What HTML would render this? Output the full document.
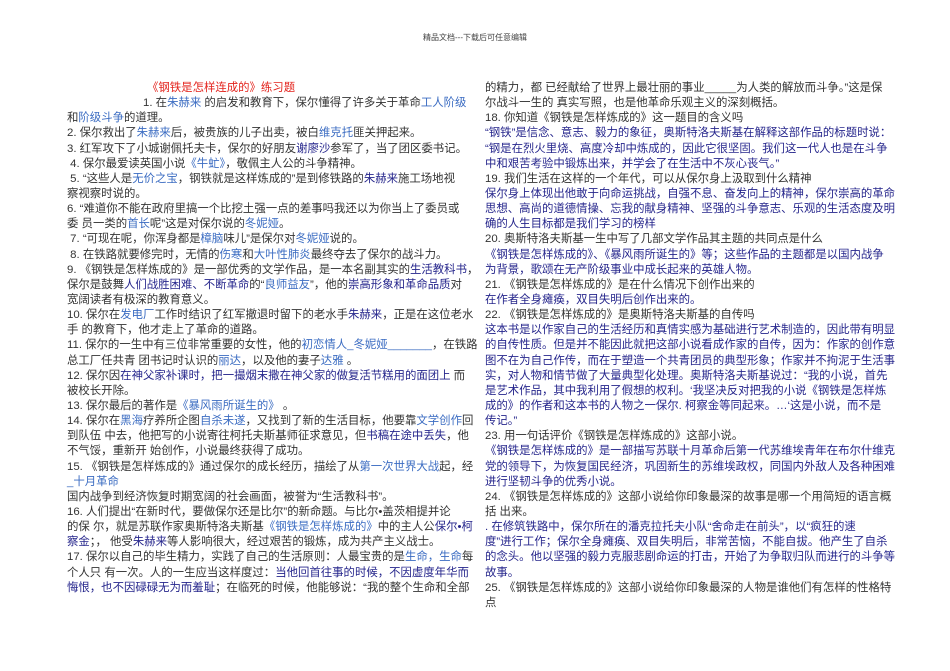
<!DOCTYPE html>
<html><head><meta charset="utf-8">
<style>
html,body{margin:0;padding:0;background:#fff;}
body{width:950px;height:671px;position:relative;overflow:hidden;font-family:"Liberation Sans","Noto Sans CJK SC",sans-serif;color:#333;}
.hdr{position:absolute;top:32px;left:0;width:950px;text-align:center;font-size:8px;color:#444;}
.col{position:absolute;top:81px;font-size:11.4px;line-height:15.15px;white-space:nowrap;}
.l{height:15.15px;}
.r{color:#e3231c;}
.b{color:#3b6cc2;}
.d{color:#26268c;}
</style></head><body>
<div class="hdr">精品文档---下载后可任意编辑</div>
<div class="col" style="left:67px;">
<div class="l" style="padding-left:80px"><span class="r">《钢铁是怎样连成的》练习题</span></div>
<div class="l" style="padding-left:76px">1. 在<span class="b">朱赫来</span> 的启发和教育下，保尔懂得了许多关于革命<span class="b">工人阶级</span></div>
<div class="l">和<span class="b">阶级斗争</span>的道理。</div>
<div class="l">2. 保尔救出了<span class="b">朱赫来</span>后，被贵族的儿子出卖，被白<span class="b">维克托</span>匪关押起来。</div>
<div class="l">3. 红军攻下了小城谢佩托夫卡，保尔的好朋友<span class="d">谢廖沙</span>参军了，当了团区委书记。</div>
<div class="l">&nbsp;4. 保尔最爱读英国小说<span class="b">《牛虻》</span>，敬佩主人公的斗争精神。</div>
<div class="l">&nbsp;5. “这些人是<span class="b">无价之宝</span>，钢铁就是这样炼成的”是到修铁路的<span class="d">朱赫来</span>施工场地视</div>
<div class="l">察视察时说的。</div>
<div class="l">6. “难道你不能在政府里搞一个比挖土强一点的差事吗我还以为你当上了委员或</div>
<div class="l">委 员一类的<span class="b">首长</span>呢”这是对保尔说的<span class="b">冬妮娅</span>。</div>
<div class="l">&nbsp;7. “可现在呢，你浑身都是<span class="b">樟脑</span>味儿”是保尔对<span class="b">冬妮娅</span>说的。</div>
<div class="l">&nbsp;8. 在铁路就要修完时，无情的<span class="b">伤寒</span>和<span class="b">大叶性肺炎</span>最终夺去了保尔的战斗力。</div>
<div class="l">9. 《钢铁是怎样炼成的》是一部优秀的文学作品，是一本名副其实的<span class="d">生活教科书</span>，</div>
<div class="l">保尔是鼓舞<span class="d">人们战胜困难、不断革命</span>的“<span class="b">良师益友</span>”，他的<span class="d">崇高形象和革命品质</span>对</div>
<div class="l">宽阔读者有极深的教育意义。</div>
<div class="l">10. 保尔在<span class="b">发电厂</span>工作时结识了红军撤退时留下的老水手<span class="d">朱赫来</span>，正是在这位老水</div>
<div class="l">手 的教育下，他才走上了革命的道路。</div>
<div class="l">11. 保尔的一生中有三位非常重要的女性，他的<span class="b">初恋情人_冬妮娅_______</span>，在铁路</div>
<div class="l">总工厂任共青 团书记时认识的<span class="b">丽达</span>，以及他的妻子<span class="b">达雅</span> 。</div>
<div class="l">12. 保尔因<span class="d">在神父家补课时，把一撮烟末撒在神父家的做复活节糕用的面团上</span> 而</div>
<div class="l">被校长开除。</div>
<div class="l">13. 保尔最后的著作是<span class="b">《暴风雨所诞生的》</span> 。</div>
<div class="l">14. 保尔在<span class="b">黑海</span>疗养所企图<span class="b">自杀未遂</span>，又找到了新的生活目标，他要靠<span class="b">文学创作</span>回</div>
<div class="l">到队伍 中去，他把写的小说寄往柯托夫斯基师征求意见，但<span class="d">书稿在途中丢失</span>，他</div>
<div class="l">不气馁，重新开 始创作，小说最终获得了成功。</div>
<div class="l">15. 《钢铁是怎样炼成的》通过保尔的成长经历，描绘了从<span class="b">第一次世界大战</span>起，经</div>
<div class="l"><span class="b">_十月革命</span></div>
<div class="l">国内战争到经济恢复时期宽阔的社会画面，被誉为“生活教科书”。</div>
<div class="l">16. 人们提出“在新时代，要做保尔还是比尔”的新命题。与比尔•盖茨相提并论</div>
<div class="l">的保 尔，就是苏联作家奥斯特洛夫斯基<span class="b">《钢铁是怎样炼成的》</span>中的主人公<span class="d">保尔•柯</span></div>
<div class="l"><span class="d">察金</span>；， 他受<span class="d">朱赫来</span>等人影响很大，经过艰苦的锻炼，成为共产主义战士。</div>
<div class="l">17. 保尔以自己的毕生精力，实践了自己的生活原则：人最宝贵的是<span class="b">生命，生命</span>每</div>
<div class="l">个人只 有一次。人的一生应当这样度过：<span class="d">当他回首往事的时候，不因虚度年华而</span></div>
<div class="l"><span class="d">悔恨，也不因碌碌无为而羞耻</span>；在临死的时候，他能够说：“我的整个生命和全部</div>
</div>
<div class="col" style="left:485px;">
<div class="l">的精力，都 已经献给了世界上最壮丽的事业_____为人类的解放而斗争。”这是保</div>
<div class="l">尔战斗一生的 真实写照，也是他革命乐观主义的深刻概括。</div>
<div class="l">18. 你知道《钢铁是怎样炼成的》这一题目的含义吗</div>
<div class="l d">“钢铁”是信念、意志、毅力的象征，奥斯特洛夫斯基在解释这部作品的标题时说：</div>
<div class="l d">“钢是在烈火里烧、高度冷却中炼成的，因此它很坚固。我们这一代人也是在斗争</div>
<div class="l d">中和艰苦考验中锻炼出来，并学会了在生活中不灰心丧气。”</div>
<div class="l">19. 我们生活在这样的一个年代，可以从保尔身上汲取到什么精神</div>
<div class="l d">保尔身上体现出他敢于向命运挑战，自强不息、奋发向上的精神，保尔崇高的革命</div>
<div class="l d">思想、高尚的道德情操、忘我的献身精神、坚强的斗争意志、乐观的生活态度及明</div>
<div class="l d">确的人生目标都是我们学习的榜样</div>
<div class="l">20. 奥斯特洛夫斯基一生中写了几部文学作品其主题的共同点是什么</div>
<div class="l d">《钢铁是怎样炼成的》、《暴风雨所诞生的》等；这些作品的主题都是以国内战争</div>
<div class="l d">为背景，歌颂在无产阶级事业中成长起来的英雄人物。</div>
<div class="l">21. 《钢铁是怎样炼成的》是在什么情况下创作出来的</div>
<div class="l d">在作者全身瘫痪，双目失明后创作出来的。</div>
<div class="l">22. 《钢铁是怎样炼成的》是奥斯特洛夫斯基的自传吗</div>
<div class="l d">这本书是以作家自己的生活经历和真情实感为基础进行艺术制造的，因此带有明显</div>
<div class="l d">的自传性质。但是并不能因此就把这部小说看成作家的自传，因为：作家的创作意</div>
<div class="l d">图不在为自己作传，而在于塑造一个共青团员的典型形象；作家并不拘泥于生活事</div>
<div class="l d">实，对人物和情节做了大量典型化处理。奥斯特洛夫斯基说过：“我的小说，首先</div>
<div class="l d">是艺术作品，其中我利用了假想的权利。‘我坚决反对把我的小说《钢铁是怎样炼</div>
<div class="l d">成的》的作者和这本书的人物之一保尔. 柯察金等同起来。…‘这是小说，而不是</div>
<div class="l d">传记。”</div>
<div class="l">23. 用一句话评价《钢铁是怎样炼成的》这部小说。</div>
<div class="l d">《钢铁是怎样炼成的》是一部描写苏联十月革命后第一代苏维埃青年在布尔什维克</div>
<div class="l d">党的领导下，为恢复国民经济，巩固新生的苏维埃政权，同国内外敌人及各种困难</div>
<div class="l d">进行坚韧斗争的优秀小说。</div>
<div class="l">24. 《钢铁是怎样炼成的》这部小说给你印象最深的故事是哪一个用简短的语言概</div>
<div class="l">括 出来。</div>
<div class="l d">. 在修筑铁路中，保尔所在的潘克拉托夫小队“舍命走在前头”，以“疯狂的速</div>
<div class="l d">度”进行工作；保尔全身瘫痪、双目失明后，非常苦恼，不能自拔。他产生了自杀</div>
<div class="l d">的念头。他以坚强的毅力克服悲剧命运的打击，开始了为争取归队而进行的斗争等</div>
<div class="l d">故事。</div>
<div class="l">25. 《钢铁是怎样炼成的》这部小说给你印象最深的人物是谁他们有怎样的性格特</div>
<div class="l">点</div>
</div>
</body></html>
